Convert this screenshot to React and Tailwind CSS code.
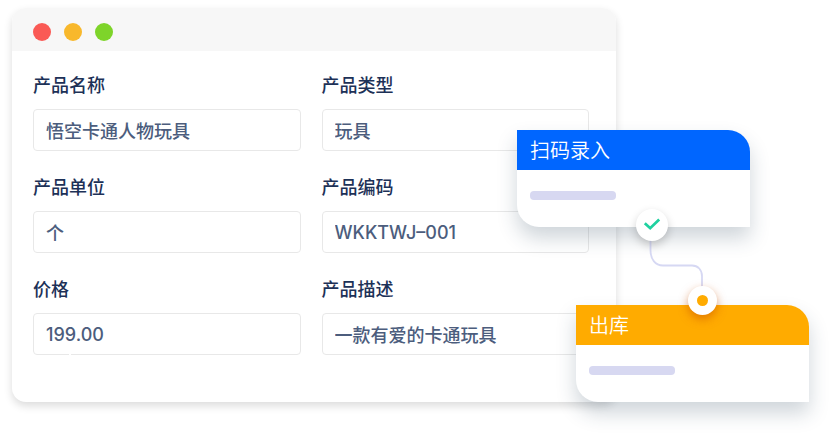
const fields = [
  { id: 'name', label: '产品名称', value: '悟空卡通人物玩具' },
  { id: 'type', label: '产品类型', value: '玩具' },
  { id: 'unit', label: '产品单位', value: '个' },
  { id: 'code', label: '产品编码', value: 'WKKTWJ–001' },
  { id: 'price', label: '价格', value: '199.00', notched: true },
  { id: 'desc', label: '产品描述', value: '一款有爱的卡通玩具' },
];

function Field({ id, label, value, notched }) {
  return (
    <div className="flex min-w-0 flex-col gap-[11px]">
      <label htmlFor={id} className="text-[18px] leading-6 font-medium text-[#1d3157]">
        {label}
      </label>
      <div className="relative">
        <input
          id={id}
          type="text"
          defaultValue={value}
          className="block h-[42px] w-full rounded-[4px] border border-[#e8e8e8] bg-white px-3 text-[18px] font-medium text-[#4c5d7d] outline-none"
        />
        {notched && <span className="absolute bottom-0 left-9 h-px w-[2px] bg-white" />}
      </div>
    </div>
  );
}

function StepCard({ title, headerClass }) {
  return (
    <section className="w-[233px] overflow-hidden rounded-tr-[22px] rounded-bl-[22px] bg-white shadow-[0_11px_20px_rgba(38,62,86,0.22)]">
      <h2 className={`flex h-10 items-center px-[13px] pt-px text-[20px] leading-7 font-[350] text-white ${headerClass}`}>
        {title}
      </h2>
      <div className="px-[13px] pt-[21px] pb-[27px]">
        <div className="h-[9px] w-[86px] rounded-[4px] bg-[#d7d8f1]" />
      </div>
    </section>
  );
}

export default function App() {
  return (
    <main className="relative min-h-screen bg-white pt-2 pr-[220px] pb-11 pl-3 font-['Inter','Noto_Sans_CJK_SC',sans-serif]">
      <div className="overflow-hidden rounded-[14px] bg-white shadow-[0_4px_8px_rgba(0,0,0,0.14)]">
        <header className="flex h-[43px] items-center gap-[13px] bg-[#f7f7f7] px-[21px] pt-1">
          <span className="size-[18px] rounded-full bg-[#fa5a55]" />
          <span className="size-[18px] rounded-full bg-[#f8b82c]" />
          <span className="size-[18px] rounded-full bg-[#7ed42a]" />
        </header>
        <form className="grid grid-cols-2 gap-x-[21px] gap-y-[25px] pt-[23px] pr-[27px] pb-[47px] pl-[21px]">
          {fields.map((field) => (
            <Field key={field.id} {...field} />
          ))}
        </form>
      </div>

      <div className="absolute top-[130px] right-[27px] flex w-[292px] flex-col gap-[78px]">
        <StepCard title="扫码录入" headerClass="bg-[#0066ff]" />
        <svg className="absolute top-[108px] left-[130px] h-[56px] w-[60px]" viewBox="0 0 60 56" fill="none" aria-hidden="true">
          <path d="M3.500 0V12C3.500 21 8 27.500 16 27.500H45C51 27.500 55 32 55 38V56" stroke="#d6d8f3" strokeWidth="1.800" />
        </svg>
        <div className="self-end">
          <StepCard title="出库" headerClass="bg-[#ffab00]" />
        </div>
        <span className="absolute top-[79px] left-[119px] flex size-8 items-center justify-center rounded-full bg-white shadow-[0_4px_10px_rgba(0,0,0,0.2)]">
          <svg className="size-[18px]" viewBox="0 0 18 18" fill="none" aria-hidden="true">
            <path d="M1.800 7.200L7.200 12.200L16.200 3.600" stroke="#1fd1a0" strokeWidth="2.800" />
          </svg>
        </span>
        <span className="absolute top-[156px] left-[171px] flex size-[29px] items-center justify-center rounded-full bg-white shadow-[0_4px_10px_rgba(200,80,0,0.55)]">
          <span className="size-[11px] rounded-full bg-[#ffab00]" />
        </span>
      </div>
    </main>
  );
}
